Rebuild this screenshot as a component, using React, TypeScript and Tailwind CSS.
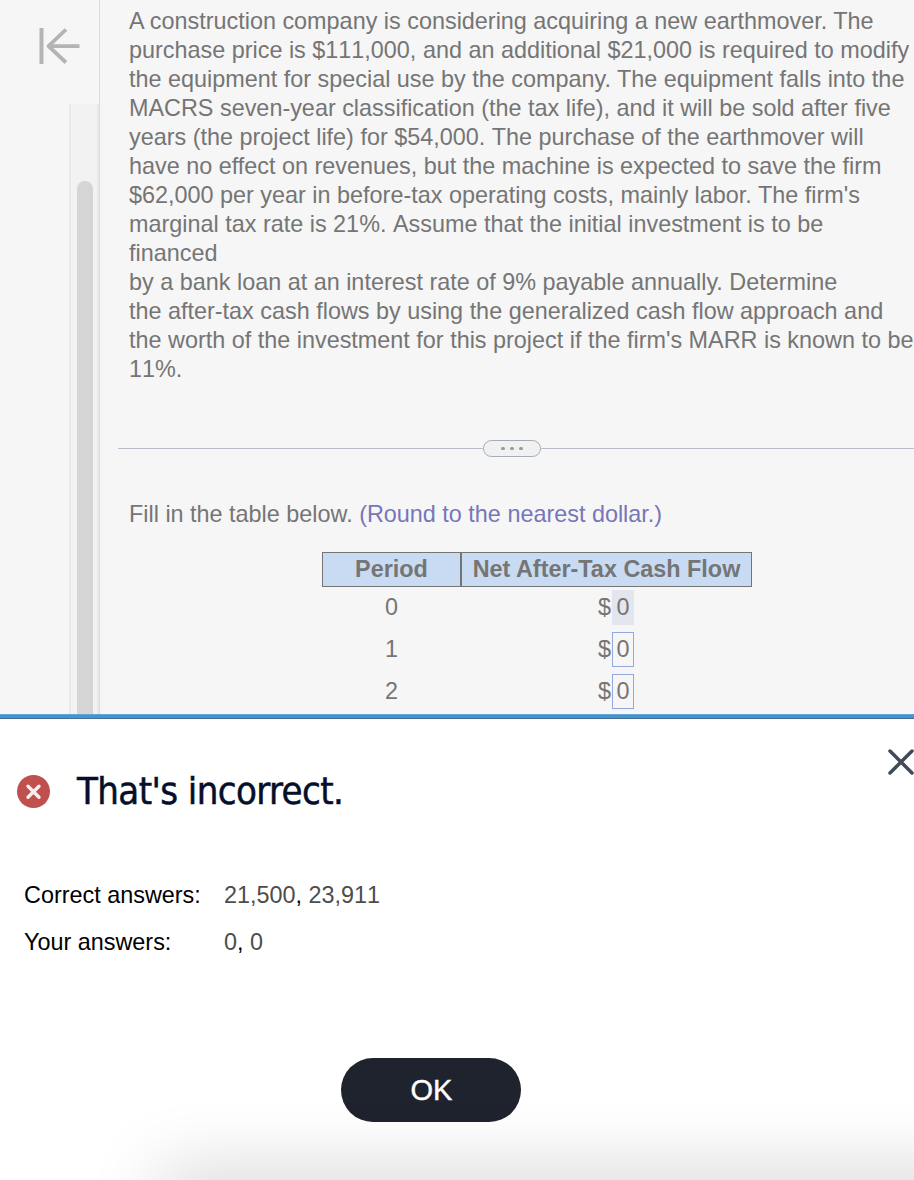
const problemLines = [
  'A construction company is considering acquiring a new earthmover. The',
  'purchase price is $111,000, and an additional $21,000 is required to modify',
  'the equipment for special use by the company. The equipment falls into the',
  'MACRS seven-year classification (the tax life), and it will be sold after five',
  'years (the project life) for $54,000. The purchase of the earthmover will',
  'have no effect on revenues, but the machine is expected to save the firm',
  "$62,000 per year in before-tax operating costs, mainly labor. The firm's",
  'marginal tax rate is 21%. Assume that the initial investment is to be',
  'financed',
  'by a bank loan at an interest rate of 9% payable annually. Determine',
  'the after-tax cash flows by using the generalized cash flow approach and',
  "the worth of the investment for this project if the firm's MARR is known to be",
  '11%.',
];

const rows = [
  { period: 0, value: '0', active: true },
  { period: 1, value: '0', active: false },
  { period: 2, value: '0', active: false },
];

export default function App() {
  return (
    <div className="flex h-[1180px] w-[914px] flex-col overflow-hidden bg-white font-['Liberation_Sans',Arial,sans-serif] text-[23.4px] leading-[29px]">
      <div className="flex h-[714px] shrink-0 overflow-hidden bg-[#f6f6f6] text-[#757575]">
        <Sidebar />
        <Question />
      </div>
      <ResultPanel />
    </div>
  );
}

// Digits are set without kerning so that pairs like "11" keep their full width
function ProblemLine({ text }: { text: string }) {
  return (
    <p>
      {text.split(/(\$?\d[\d,]*%?\.? ?)/).map((part, i) =>
        i % 2 === 1 ? (
          <span key={i} className="[font-kerning:none]">
            {part}
          </span>
        ) : (
          part
        )
      )}
    </p>
  );
}

function Sidebar() {
  return (
    <aside className="flex w-[100px] shrink-0 flex-col items-end border-r border-[#d9dadb]">
      <div className="flex h-[104px] w-full shrink-0 pt-7 pl-[39px]">
        <svg
          className="h-9 w-[41px]"
          viewBox="0 0 41 36"
          fill="none"
          stroke="#b3b5b4"
          strokeWidth="3.8"
          strokeLinejoin="round"
        >
          <path d="M2.5 0v36" strokeWidth="4" />
          <path d="M40.5 18.2H9.5M27 1.5L9.5 18.2L27 34.5" />
        </svg>
      </div>
      {/* Scrollbar */}
      <div className="flex w-[30px] grow border-r-2 border-l-2 border-[#e9e9e9] bg-[#f2f2f2] pt-[77px] pl-[6px]">
        <div className="w-4 rounded-t-full bg-[#d5d5d5]" />
      </div>
    </aside>
  );
}

function Question() {
  return (
    <main className="flex min-w-0 grow flex-col">
      <div className="pt-[7px] pl-[29px] whitespace-nowrap">
        {problemLines.map((line) => (
          <ProblemLine key={line} text={line} />
        ))}
      </div>

      {/* Divider with expand handle */}
      <div className="mt-[55px] flex h-[18px] items-center pl-[18px]">
        <div className="h-px w-[365px] bg-[#b8bcc8]" />
        <button className="flex h-[17px] w-[58px] items-center justify-center gap-[5px] rounded-full border border-[#a7abb8] bg-[#f0f1f1]">
          <span className="h-[3px] w-1 rounded-full bg-[#9a9a9a]" />
          <span className="h-[3px] w-1 rounded-full bg-[#9a9a9a]" />
          <span className="h-[3px] w-1 rounded-full bg-[#9a9a9a]" />
        </button>
        <div className="h-px grow bg-[#b8bcc8]" />
      </div>

      <p className="mt-[43px] pl-[29px] whitespace-nowrap">
        Fill in the table below. <span className="text-[#7776b8]">(Round to the nearest dollar.)</span>
      </p>

      <div className="mt-[23px] ml-[222px] w-[430px]">
        <div className="-mb-px flex h-[35px] border border-[#757575] bg-[#c8dbf3] text-center font-bold whitespace-nowrap">
          <div className="w-[139px] border-r-2 border-[#757575] pt-[2px]">Period</div>
          <div className="grow pt-[2px]">Net After-Tax Cash Flow</div>
        </div>
        {rows.map((row) => (
          <div key={row.period} className="flex h-[42px] items-center">
            <div className="w-[139px] text-center">{row.period}</div>
            <div className="flex grow items-center pl-[137px]">
              <span className="w-[14px]">$</span>
              <span
                className={`flex h-[35px] w-[22px] items-center justify-center ${
                  row.active ? 'bg-[#e3e6ef]' : 'border border-[#96a9df]'
                }`}
              >
                {row.value}
              </span>
            </div>
          </div>
        ))}
      </div>
    </main>
  );
}

function ResultPanel() {
  return (
    <section className="relative flex grow flex-col bg-white text-black">
      <div className="h-[5px] shrink-0 border-t border-b border-t-[#5fa5da] border-b-[#446f92] bg-[#4593d0]" />
      <button className="absolute top-[34px] right-[-1px]">
        <svg className="size-7" viewBox="0 0 28 28" stroke="#414a57" strokeWidth="3.5" strokeLinecap="round">
          <path d="M3 3l22 22M25 3L3 25" />
        </svg>
      </button>

      <div className="flex items-center pt-[48px] pl-[17px]">
        <svg className="size-[33px]" viewBox="0 0 33 33">
          <circle cx="16.5" cy="16.5" r="16.5" fill="#c0504d" />
          <path d="M11 11.2l11 11M22 11.2l-11 11" stroke="#f8eeee" strokeWidth="3.4" strokeLinecap="round" />
        </svg>
        <h2 className="ml-[27px] font-['DejaVu_Sans_Condensed','DejaVu_Sans',sans-serif] text-[38px] leading-[48px] tracking-[-0.6px] whitespace-nowrap text-[#050f29] [font-stretch:condensed] [-webkit-text-stroke:0.5px_#050f29]">
          That's incorrect.
        </h2>
      </div>

      <dl className="mt-[66px] grid grid-cols-[200px_1fr] gap-y-[18px] pl-[24px]">
        <dt>Correct answers:</dt>
        <dd className="text-[#4d4d4d] [font-kerning:none]">
          21,500<span className="text-black">,</span> 23,911
        </dd>
        <dt>Your answers:</dt>
        <dd className="text-[#4d4d4d]">
          0<span className="text-black">,</span> 0
        </dd>
      </dl>

      <button className="mt-[101px] ml-[341px] h-[64px] w-[180px] shrink-0 rounded-full bg-[#1f232e] pl-px text-[29px] text-white [-webkit-text-stroke:0.4px_white]">
        OK
      </button>

      {/* Shadow rising from below the panel */}
      <div className="pointer-events-none absolute inset-0 overflow-hidden">
        <div className="absolute top-full left-[170px] h-10 w-[1000px] shadow-[0_0_70px_10px_rgba(0,0,0,0.17)]" />
      </div>
    </section>
  );
}
